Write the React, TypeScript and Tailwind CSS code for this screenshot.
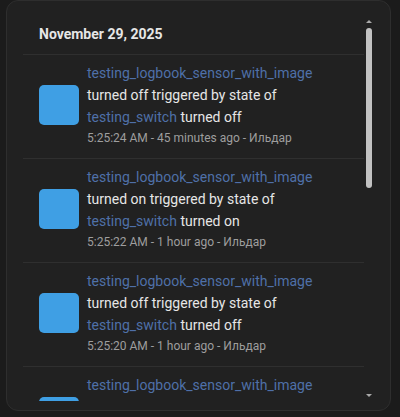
import React from 'react';

type Entry = {
  action: string;
  state: string;
  time: string;
};

const entries: Entry[] = [
  { action: 'turned off', state: 'turned off', time: '5:25:24 AM - 45 minutes ago - Ильдар' },
  { action: 'turned on', state: 'turned on', time: '5:25:22 AM - 1 hour ago - Ильдар' },
  { action: 'turned off', state: 'turned off', time: '5:25:20 AM - 1 hour ago - Ильдар' },
  { action: 'turned on', state: 'turned on', time: '5:25:18 AM - 1 hour ago - Ильдар' },
];

const Arrow = ({ down }: { down?: boolean }) => (
  <svg width="6" height="3" viewBox="0 0 6 3" className="block">
    {down ? <polygon points="0,0 6,0 3,3" fill="#a9a9a9" /> : <polygon points="0,3 6,3 3,0" fill="#a9a9a9" />}
  </svg>
);

const LogEntry = ({ entry }: { entry: Entry }) => (
  <div className="flex items-center gap-2 border-b border-[#2f2f2f] px-4 pt-[7px] pb-[10px]">
    <div className="h-10 w-10 shrink-0 rounded-[5px] bg-[#3f9fe4]" />
    <div className="min-w-0 flex-1 text-sm">
      <div className="leading-[22px] text-[#4f70a8]">testing_logbook_sensor_with_image</div>
      <div className="leading-[22px] text-[#e6e6e6]">
        {entry.action} triggered by state of <span className="text-[#4f70a8]">testing_switch</span> {entry.state}
      </div>
      <div className="text-xs leading-5 text-[#9e9e9e]">{entry.time}</div>
    </div>
  </div>
);

const App = () => {
  return (
    <div className="h-[417px] w-[400px] bg-[#1b1b1b] font-['Roboto',sans-serif]">
      <div className="ml-[6px] flex h-[411px] w-[385px] rounded-xl border border-[#2e2e2e] bg-[#212121] pl-4 pr-[15px] pt-4 pb-[9px]">
        <div className="min-w-0 flex-1 overflow-hidden">
          <div className="border-b border-[#2f2f2f] px-4 pt-[7px] pb-[10px] text-sm font-bold leading-5 text-[#e6e6e6]">
            November 29, 2025
          </div>
          {entries.map((e, i) => (
            <LogEntry key={i} entry={e} />
          ))}
        </div>
        <div className="flex w-[11px] flex-col items-start pl-[2px] pt-[3px] pb-[4px]">
          <Arrow />
          <div className="mt-[5px] h-[160px] w-[6px] rounded-full bg-[#c2c2c2]" />
          <div className="flex-1" />
          <Arrow down />
        </div>
      </div>
    </div>
  );
};

export default App;
